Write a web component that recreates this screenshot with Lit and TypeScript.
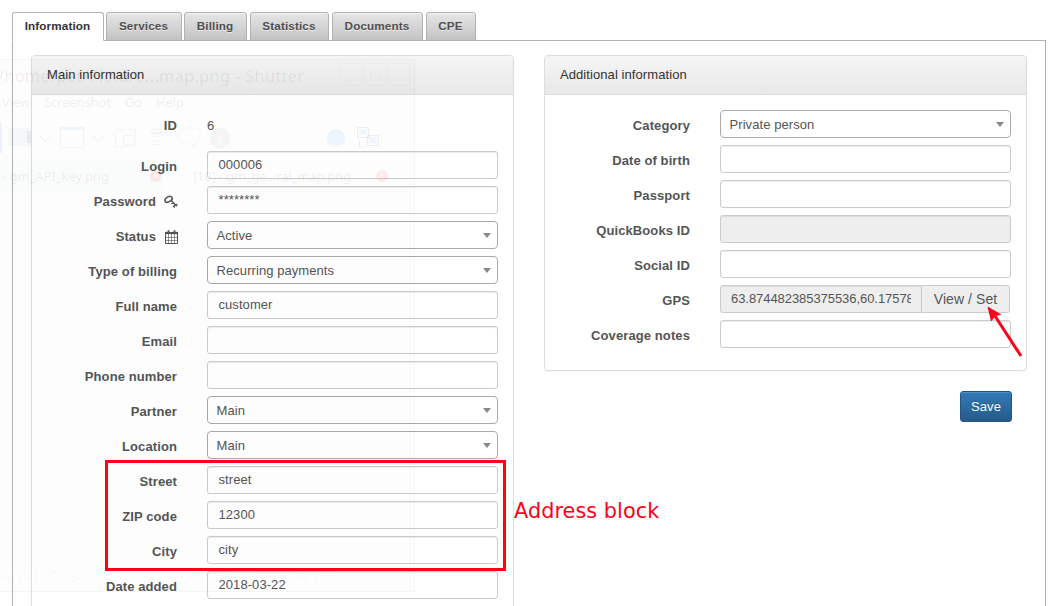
import { LitElement, html, css, svg, nothing } from "lit";
import { customElement, property } from "lit/decorators.js";

type Kind = "text" | "input" | "select" | "readonly" | "gps";
interface Field {
  label: string;
  kind: Kind;
  value?: string;
  icon?: "key" | "calendar";
}

const MAIN: Field[] = [
  { label: "ID", kind: "text", value: "6" },
  { label: "Login", kind: "input", value: "000006" },
  { label: "Password", kind: "input", value: "********", icon: "key" },
  { label: "Status", kind: "select", value: "Active", icon: "calendar" },
  { label: "Type of billing", kind: "select", value: "Recurring payments" },
  { label: "Full name", kind: "input", value: "customer" },
  { label: "Email", kind: "input" },
  { label: "Phone number", kind: "input" },
  { label: "Partner", kind: "select", value: "Main" },
  { label: "Location", kind: "select", value: "Main" },
  { label: "Street", kind: "input", value: "street" },
  { label: "ZIP code", kind: "input", value: "12300" },
  { label: "City", kind: "input", value: "city" },
  { label: "Date added", kind: "input", value: "2018-03-22" },
];

const EXTRA: Field[] = [
  { label: "Category", kind: "select", value: "Private person" },
  { label: "Date of birth", kind: "input" },
  { label: "Passport", kind: "input" },
  { label: "QuickBooks ID", kind: "readonly" },
  { label: "Social ID", kind: "input" },
  { label: "GPS", kind: "gps", value: "63.874482385375536,60.17578125" },
  { label: "Coverage notes", kind: "input" },
];

const keyIcon = html`<svg class="icon" width="14" height="14" viewBox="0 0 14 14" fill="none" stroke="#555">
  <ellipse cx="4.6" cy="4.3" rx="3.9" ry="2.5" transform="rotate(-30 4.6 4.3)" stroke-width="1.5" />
  <path d="M6.800 5L12.800 11.300M9.400 7.800L7.200 8.600M11.200 9.600L9.600 11.400L11 12.400M12 10.500L13.400 9.200" stroke-width="1.4" />
</svg>`;

const calendarIcon = html`<svg class="icon" width="14" height="14" viewBox="0 0 14 14" fill="none" stroke="#555">
  <path d="M1.500 3V13.500H13.500V3" stroke-width="1" />
  <path d="M1 3H14" stroke-width="2.200" />
  <path d="M4.500 0.300V4M10.500 0.300V4" stroke-width="1.800" />
  <path d="M4.500 4V13M7.500 4V13M10.500 4V13M1 7.500H14M1 10.500H14" stroke-width="0.600" />
</svg>`;

@customElement("form-row")
class FormRow extends LitElement {
  @property({ attribute: false }) field!: Field;

  static styles = css`
    :host { display: flex; height: 28px; color: #555; }
    .label {
      width: 145px; flex: none; display: flex; justify-content: flex-end; align-items: center;
      font-weight: bold; letter-spacing: 0.1px; padding-top: 4px; box-sizing: border-box; white-space: nowrap;
    }
    .icon { margin: 0 -1px 0 8px; flex: none; overflow: visible; }
    .control { margin-left: 30px; width: 291px; box-sizing: border-box; display: flex; align-items: center; white-space: nowrap; letter-spacing: 0.07px; }
    .text { padding: 3px 0 0 0; }
    .input { border: 1px solid #ccc; border-radius: 3px; background: #fff; padding: 0 10.5px 0; box-shadow: inset 0 1px 1px rgba(0, 0, 0, 0.075); }
    .readonly { border: 1px solid #ccc; border-radius: 3px; background: #eee; box-shadow: inset 0 1px 1px rgba(0, 0, 0, 0.075); }
    .select { border: 1px solid #aaa; border-radius: 4px; background: #fff; padding: 1px 6px 0 8.5px; justify-content: space-between; }
    .arrow { width: 0; height: 0; border: 4px solid transparent; border-top: 5px solid #888; border-bottom: 0; }
    .group { align-items: stretch; }
    .gps { width: 202px; box-sizing: border-box; border: 1px solid #ccc; border-radius: 3px 0 0 3px; background: #eee; padding: 0 10px; display: flex; align-items: center; box-shadow: inset 0 1px 1px rgba(0, 0, 0, 0.075); }
    .clip { overflow: hidden; letter-spacing: -0.06px; }
    .addon { width: 88px; box-sizing: border-box; border: 1px solid #ccc; border-left: 0; border-radius: 0 3px 3px 0; background: #eee; font-size: 14px; display: flex; align-items: center; justify-content: center; }
  `;

  private control() {
    const f = this.field;
    switch (f.kind) {
      case "text":
        return html`<div class="control text">${f.value}</div>`;
      case "select":
        return html`<div class="control select"><span>${f.value}</span><span class="arrow"></span></div>`;
      case "gps":
        return html`<div class="control group">
          <div class="gps"><span class="clip">${f.value}</span></div>
          <div class="addon">View / Set</div>
        </div>`;
      default:
        return html`<div class="control ${f.kind}">${f.value ?? nothing}</div>`;
    }
  }

  render() {
    const f = this.field;
    return html`<div class="label">
        <span>${f.label}</span>${f.icon === "key" ? keyIcon : f.icon === "calendar" ? calendarIcon : nothing}
      </div>
      ${this.control()}`;
  }
}

@customElement("info-panel")
class InfoPanel extends LitElement {
  @property() heading = "";
  @property({ attribute: false }) fields: Field[] = [];

  static styles = css`
    :host { display: block; box-sizing: border-box; width: 483px; border: 1px solid #ddd; border-radius: 4px; background: #fff; box-shadow: 0 1px 1px rgba(0, 0, 0, 0.05); }
    .head { height: 39px; box-sizing: border-box; border-bottom: 1px solid #ddd; border-radius: 3px 3px 0 0; background: linear-gradient(#f5f5f5, #e8e8e8); color: #333; letter-spacing: 0.08px; padding-left: 15px; display: flex; align-items: center; }
    .body { display: flex; flex-direction: column; gap: 7px; padding: 15px 0 22px; }
    .lead { margin-bottom: 6px; }
  `;

  render() {
    return html`<div class="head">${this.heading}</div>
      <div class="body">
        ${this.fields.map((f) => html`<form-row class=${f.kind === "text" ? "lead" : ""} .field=${f}></form-row>`)}
      </div>`;
  }
}

/* Faded window showing through the left part of the page. */
@customElement("faded-window")
class FadedWindow extends LitElement {
  static styles = css`
    :host { display: block; }
    .window { display: block; }
    .title { font: 16px "Noto Sans", sans-serif; }
    .small { font: 13px "Noto Sans", sans-serif; }
    .status { font: 12px "Noto Sans", sans-serif; }
  `;

  render() {
    return html`<svg class="window" width="420" height="547" viewBox="0 59 420 547" fill="none">
      <rect x="-2" y="59.5" width="416.5" height="532" fill="#000" fill-opacity=".006" stroke="#000" stroke-opacity=".03" />
      <rect x="0" y="161" width="163" height="31" fill="#40c090" fill-opacity=".02" />
      <path d="M163 161.5H394.5V192M0 191.5H410.5V590" stroke="#000" stroke-opacity=".012" />
      <g fill="#000" fill-opacity=".08">
        <text class="title" x="-2" y="82" textLength="306">/home/pet/Picture...map.png - Shutter</text>
      </g>
      <g fill="#000" fill-opacity=".075">
        <text class="small" x="2" y="107" textLength="28">View</text>
        <text class="small" x="44" y="107" textLength="67">Screenshot</text>
        <text class="small" x="125" y="107" textLength="17">Go</text>
        <text class="small" x="156" y="107" textLength="28">Help</text>
        <text class="small" x="2" y="181" textLength="107">- gm_API_key.png</text>
        <text class="small" x="193" y="181" textLength="158">[10] - gm_ge...ral_map.png</text>
      </g>
      <g fill="#000" fill-opacity=".035">
        <text class="status" x="-1" y="581" textLength="78">xels  411.7 KB</text>
        <text class="status" x="193" y="581" textLength="87">Include Cursor</text>
        <text class="status" x="292" y="581" textLength="48">Delay: 0</text>
      </g>
      <g stroke="#000" stroke-opacity=".018">
        ${[339, 363, 387].map((x) => svg`<rect x=${x + 0.5} y="63.5" width="22" height="22" rx="2" />`)}
        <path d="M345 80.5H357M370.5 70.5h10v9h-10zM394 70l10 10M404 70l-10 10" />
      </g>
      <rect x="0" y="123" width="2" height="30" fill="#1e90ff" fill-opacity=".09" />
      <rect x="8" y="128" width="23" height="18" fill="#60a0a0" fill-opacity=".05" />
      <rect x="27" y="131" width="4" height="12" fill="#000" fill-opacity=".05" />
      <rect x="60" y="127" width="24" height="3" fill="#2070c0" fill-opacity=".06" />
      <g stroke="#000" stroke-opacity=".035">
        <path d="M60.5 128V147.5H83.5V128M115.5 129.5h20v17h-20zM123.5 135.5h10v9h-10zM150 129.5h12M151 136.5h10M151 140.5h10M151 144.5h10" />
        <path d="M180 131q0-3 4-3h12q4 0 4 3v8q0 3-4 3l-3 5-3-5h-6q-5 0-5-3z" />
        <path d="M40 136l5 5 5-5M93 136l5 5 5-5" stroke-opacity=".05" />
        <path d="M243 136l5 4 5-4M390 136l5 4 5-4" stroke-opacity=".02" />
        <path d="M357.500 127.500h11v10h-11zM367.500 135.500h11v10h-11zM359.500 140v7h8" stroke-opacity=".06" />
      </g>
      <path d="M150 133h12" stroke="#4060c0" stroke-opacity=".06" stroke-width="3" />
      <circle cx="220" cy="138" r="10.500" fill="#000" fill-opacity=".03" />
      <path d="M220 132v12l4-3" stroke="#fff" stroke-opacity=".6" />
      <circle cx="336" cy="138" r="9" fill="#2090ff" fill-opacity=".08" />
      <rect x="359" y="129" width="8" height="6" fill="#2090ff" fill-opacity=".06" />
      <rect x="369" y="137" width="8" height="6" fill="#2090ff" fill-opacity=".06" />
      <g fill="#f00" fill-opacity=".08"><circle cx="156" cy="176" r="6" /><circle cx="382" cy="176" r="6" /></g>
      <path d="M154 174l4 4M158 174l-4 4M380 174l4 4M384 174l-4 4" stroke="#fff" stroke-opacity=".8" stroke-width="1.500" />
    </svg>`;
  }
}

const TABS = [
  { name: "Information", width: 92, gap: 2 },
  { name: "Services", width: 76, gap: 2 },
  { name: "Billing", width: 63, gap: 3 },
  { name: "Statistics", width: 79, gap: 3 },
  { name: "Documents", width: 91, gap: 3 },
  { name: "CPE", width: 50, gap: 0 },
];

@customElement("app-root")
class AppRoot extends LitElement {
  static styles = css`
    :host { display: block; position: relative; width: 1060px; height: 606px; overflow: hidden; background: #fff; font: 13px/20px "Liberation Sans", Arial, sans-serif; }
    .page { padding: 12px 14px 0 12px; }
    .tabs { display: flex; height: 29px; margin-bottom: -1px; position: relative; }
    .tab { box-sizing: border-box; border: 1px solid #b2b2b2; border-radius: 3px 3px 0 0; background: linear-gradient(#e6e6e6, #c3c3c3); box-shadow: inset 0 1px 0 rgba(255, 255, 255, 0.5); color: #4f4f4f; text-shadow: 0 1px 0 rgba(255, 255, 255, 0.6); font-size: 11.7px; letter-spacing: 0.13px; font-weight: bold; display: flex; align-items: center; justify-content: center; padding: 0 1px 2px 0; }
    .active { background: #fff; border-bottom-color: #fff; color: #333; }
    .pane { border: 1px solid #b2b2b2; height: 600px; box-sizing: border-box; padding: 14px 18px 0; display: flex; justify-content: space-between; align-items: flex-start; }
    .side { display: flex; flex-direction: column; align-items: flex-end; }
    .save { margin: 20px 15px 0 0; width: 52px; height: 31px; box-sizing: border-box; border: 1px solid #245580; border-radius: 3px; background: linear-gradient(#337ab7, #265a88); box-shadow: inset 0 1px 0 rgba(255, 255, 255, 0.15); color: #fff; font: inherit; letter-spacing: 0.1px; padding: 0; text-shadow: 0 -1px 0 rgba(0, 0, 0, 0.2); }
    .faded { position: absolute; left: 0; top: 59px; pointer-events: none; }
    .frame { position: absolute; left: 105px; top: 460px; width: 401px; height: 111px; box-sizing: border-box; border: 3px solid #ff0018; }
    .note { position: absolute; left: 514px; top: 499px; font: 20.8px/24px "DejaVu Sans", sans-serif; letter-spacing: 0.05px; color: #ff0018; white-space: nowrap; }
    .pointer { position: absolute; left: 980px; top: 300px; }
  `;

  render() {
    return html`
      <div class="page">
        <div class="tabs">
          ${TABS.map(
            (t, i) => html`<div class="tab ${i === 0 ? "active" : ""}" style="width:${t.width}px;margin-right:${t.gap}px">${t.name}</div>`
          )}
        </div>
        <div class="pane">
          <info-panel heading="Main information" .fields=${MAIN}></info-panel>
          <div class="side">
            <info-panel heading="Additional information" .fields=${EXTRA}></info-panel>
            <button class="save">Save</button>
          </div>
        </div>
      </div>
      <faded-window class="faded"></faded-window>
      <div class="frame"></div>
      <div class="note">Address block</div>
      <svg class="pointer" width="50" height="62" viewBox="0 0 50 62">
        <path d="M15 16L41 56" stroke="#ff0018" stroke-width="3" />
        <path d="M7.500 6.500L21.500 14.500L15.500 16L11 21.500Z" fill="#ff0018" />
      </svg>
    `;
  }
}
